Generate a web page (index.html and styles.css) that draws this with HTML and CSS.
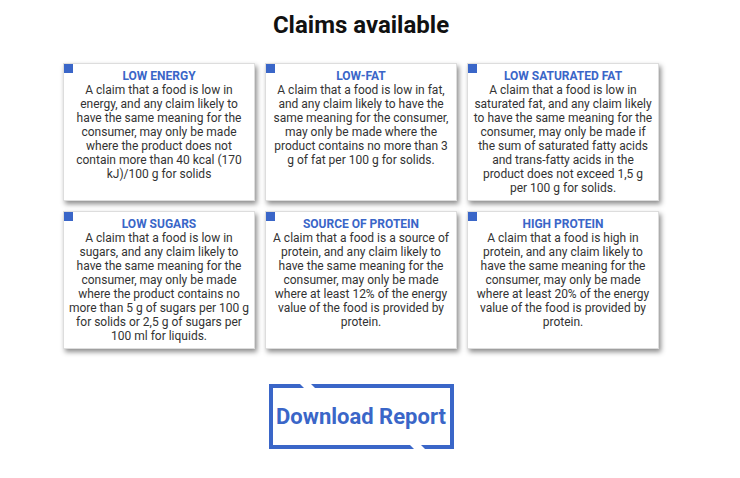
FILE: index.html
```html
<!DOCTYPE html>
<html>
<head>
<meta charset="utf-8">
<link rel="stylesheet" href="styles.css">
</head>
<body>
<div class="page">
  <h1 class="title">Claims available</h1>
  <div class="grid">
    <div class="card"><span class="mark"></span><div class="card-title">LOW ENERGY</div><p>A claim that a food is low in energy, and any claim likely to have the same meaning for the consumer, may only be made where the product does not contain more than 40 kcal (170 kJ)/100 g for solids</p></div>
    <div class="card"><span class="mark"></span><div class="card-title">LOW-FAT</div><p>A claim that a food is low in fat, and any claim likely to have the same meaning for the consumer, may only be made where the product contains no more than 3 g of fat per 100 g for solids.</p></div>
    <div class="card"><span class="mark"></span><div class="card-title">LOW SATURATED FAT</div><p>A claim that a food is low in saturated fat, and any claim likely to have the same meaning for the consumer, may only be made if the sum of saturated fatty acids and trans-fatty acids in the product does not exceed 1,5 g<br>per 100 g for solids.</p></div>
    <div class="card"><span class="mark"></span><div class="card-title">LOW SUGARS</div><p>A claim that a food is low in sugars, and any claim likely to have the same meaning for the consumer, may only be made where the product contains no more than 5 g of sugars per 100 g for solids or 2,5 g of sugars per 100 ml for liquids.</p></div>
    <div class="card"><span class="mark"></span><div class="card-title">SOURCE OF PROTEIN</div><p>A claim that a food is a source of protein, and any claim likely to have the same meaning for the consumer, may only be made where at least 12% of the energy value of the food is provided by protein.</p></div>
    <div class="card"><span class="mark"></span><div class="card-title">HIGH PROTEIN</div><p>A claim that a food is high in protein, and any claim likely to have the same meaning for the consumer, may only be made where at least 20% of the energy value of the food is provided by protein.</p></div>
  </div>
  <div class="actions">
    <a class="download" href="#">Download Report</a>
  </div>
</div>
</body>
</html>
```
FILE: styles.css
```css
html, body {
  margin: 0;
  padding: 0;
  background: #fff;
}
body {
  font-family: Roboto, "Liberation Sans", sans-serif;
  color: #333;
}
.page {
  width: 722px;
  display: flex;
  flex-direction: column;
  align-items: center;
}
.title {
  margin: 10px 0 0;
  font-size: 24px;
  font-weight: 700;
  color: #111;
  line-height: 30px;
}
.grid {
  margin-top: 23px;
  display: grid;
  grid-template-columns: repeat(3, 192px);
  grid-auto-rows: 138px;
  gap: 10px;
}
.card {
  position: relative;
  box-sizing: border-box;
  border: 1px solid #ddd;
  background: #fff;
  box-shadow: 2px 3px 5px rgba(0, 0, 0, 0.45);
  padding: 5px 4px 6px;
  text-align: center;
  font-size: 12px;
  line-height: 14px;
}
.mark {
  position: absolute;
  left: 0;
  top: 0;
  width: 9px;
  height: 9px;
  background: #3a66c8;
}
.card-title {
  color: #3a66c8;
  font-weight: 700;
}
.card p {
  margin: 0;
}
.actions {
  margin-top: 35px;
}
.download {
  position: relative;
  display: block;
  box-sizing: border-box;
  width: 185px;
  height: 65px;
  border: 4px solid #3a66c8;
  color: #3a66c8;
  font-size: 22px;
  font-weight: 700;
  text-decoration: none;
  text-align: center;
  line-height: 57px;
}
.download::before,
.download::after {
  content: "";
  position: absolute;
  width: 11px;
  height: 6px;
  background: #fff;
  transform: skewX(45deg);
}
.download::before {
  top: -5px;
  left: 29px;
}
.download::after {
  bottom: -5px;
  right: 27px;
}
```
